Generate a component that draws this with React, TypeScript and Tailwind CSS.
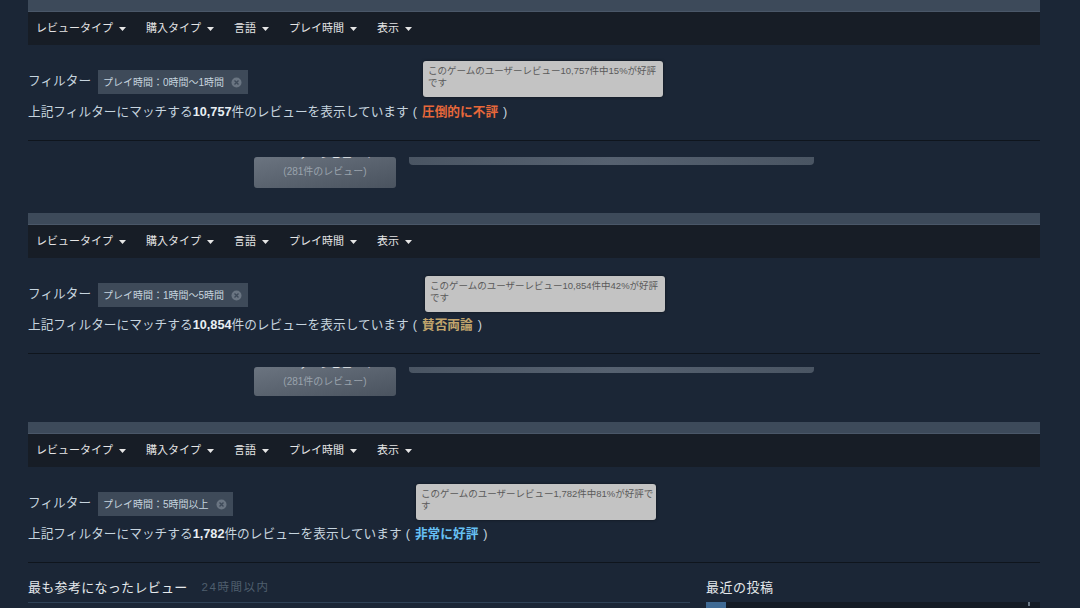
import React from "react";

type Section = {
  chip: string;
  count: string;
  rating: string;
  ratingClass: string;
  tip: [string, string];
  tipLeft: string;
  tipTop: string;
};

const SECTIONS: Section[] = [
  {
    chip: "プレイ時間：0時間～1時間",
    count: "10,757",
    rating: "圧倒的に不評",
    ratingClass: "text-[#e8683a]",
    tip: ["このゲームのユーザーレビュー10,757件中15%が好評", "です"],
    tipLeft: "left-[395px]",
    tipTop: "top-[16px]",
  },
  {
    chip: "プレイ時間：1時間～5時間",
    count: "10,854",
    rating: "賛否両論",
    ratingClass: "text-[#c2a56c]",
    tip: ["このゲームのユーザーレビュー10,854件中42%が好評", "です"],
    tipLeft: "left-[397px]",
    tipTop: "top-[18px]",
  },
  {
    chip: "プレイ時間：5時間以上",
    count: "1,782",
    rating: "非常に好評",
    ratingClass: "text-[#66c0f4]",
    tip: ["このゲームのユーザーレビュー1,782件中81%が好評で", "す"],
    tipLeft: "left-[388px]",
    tipTop: "top-[17px]",
  },
];

const MENU = ["レビュータイプ", "購入タイプ", "言語", "プレイ時間", "表示"];

function Caret() {
  return (
    <svg width="7" height="4" viewBox="0 0 7 4" className="ml-[6px]">
      <path d="M0 0 L7 0 L3.5 4 Z" fill="#e6e6e6" />
    </svg>
  );
}

function ChipClose() {
  return (
    <svg width="11" height="11" viewBox="0 0 11 11">
      <circle cx="5.5" cy="5.5" r="5" fill="#6a7582" />
      <path d="M3.5 3.5 L7.5 7.5 M7.5 3.5 L3.5 7.5" stroke="#3e4a59" strokeWidth="1.4" />
    </svg>
  );
}

function FilterSection({ s }: { s: Section }) {
  return (
    <div>
      {/* lighter strip above the menu */}
      <div className="h-[12px] bg-[#3d4a5a] border-b border-[#4a5768]" />

      {/* dropdown menu bar */}
      <div className="h-[33px] bg-[#171d26] flex items-center pl-[8px] gap-[20px] text-[11px] text-[#e6e6e6]">
        {MENU.map((m) => (
          <div key={m} className="flex items-center">
            <span>{m}</span>
            <Caret />
          </div>
        ))}
      </div>

      {/* filter + summary */}
      <div className="relative h-[96px] border-b border-[#0f151d] pt-[25px]">
        <div className="flex items-center h-[24px]">
          <span className="text-[12.7px] text-[#c6d4df] w-[70px]">フィルター</span>
          <div className="h-[24px] bg-[#3e4a59] flex items-center pl-[5px] pr-[6px] gap-[7px] text-[10px] text-[#c6d4df]">
            <span>{s.chip}</span>
            <ChipClose />
          </div>
        </div>
        <div className="mt-[9px] h-[20px] flex items-center text-[12.7px] text-[#c6d4df] whitespace-nowrap">
          <span>上記フィルターにマッチする</span>
          <span className="font-bold text-[#e8eef3]">{s.count}</span>
          <span>件のレビューを表示しています</span>
          <span className="ml-[4px]">(</span>
          <span className={`mx-[5px] font-bold ${s.ratingClass}`}>{s.rating}</span>
          <span>)</span>
        </div>

        {/* tooltip */}
        <div
          className={`absolute ${s.tipLeft} ${s.tipTop} w-[240px] h-[36px] bg-[#c3c3c3] rounded-[3px] shadow-[0_0_3px_rgba(0,0,0,0.5)] px-[5px] pt-[4px] text-[9.5px] leading-[12px] text-[#5a5a5a] whitespace-nowrap`}
        >
          <div>{s.tip[0]}</div>
          <div>{s.tip[1]}</div>
        </div>
      </div>
    </div>
  );
}

function Fragment({ h, pt, boxH, barH }: { h: string; pt: string; boxH: string; barH: string }) {
  return (
    <div className={`${h} ${pt} pl-[226px] flex items-start gap-[13px]`}>
      <div
        className={`w-[142px] ${boxH} rounded-[3px] bg-gradient-to-br from-[#6b7480] via-[#5a636f] to-[#4a535f] flex flex-col items-center`}
      >
        <div className="h-[4px] overflow-hidden">
          <div className="-mt-[9px] text-[11px] leading-[13px] text-[#e4e8ec]">ユーザーレビュー：</div>
        </div>
        <div className="mt-[3px] text-[10px] text-[#9aa3ad]">(281件のレビュー)</div>
      </div>
      <div className={`w-[405px] ${barH} rounded-b-[4px] bg-gradient-to-r from-[#4a5563] via-[#566170] to-[#4a5563]`} />
    </div>
  );
}

export default function App() {
  return (
    <div className="w-[1080px] h-[608px] overflow-hidden bg-[#1b2636] font-['Liberation_Sans','Noto_Sans_CJK_JP',sans-serif]">
      <div className="ml-[28px] w-[1012px]">
        <FilterSection s={SECTIONS[0]} />
        <Fragment h="h-[72px]" pt="pt-[16px]" boxH="h-[31px]" barH="h-[8px]" />
        <FilterSection s={SECTIONS[1]} />
        <Fragment h="h-[68px]" pt="pt-[13px]" boxH="h-[29px]" barH="h-[6px]" />
        <FilterSection s={SECTIONS[2]} />

        {/* bottom: most helpful / recent */}
        <div className="flex gap-[16px]">
          <div className="w-[662px]">
            <div className="h-[40px] pt-[15px] flex items-start border-b border-[#2f4257]">
              <span className="text-[13px] text-[#e5e9ec] tracking-[0.3px]">最も参考になったレビュー</span>
              <span className="ml-[14px] text-[11.5px] text-[#4f5f6e] tracking-[1.5px] mt-[1px]">24時間以内</span>
            </div>
          </div>
          <div className="w-[334px]">
            <div className="h-[39px] pt-[15px] text-[13px] text-[#e5e9ec] tracking-[0.5px]">最近の投稿</div>
            <div className="h-[20px] bg-[#141b25] flex items-start">
              <div className="w-[20px] h-[8px] bg-[#3f6a94]" />
              <div className="ml-auto mr-[10px] w-[2px] h-[4px] bg-[#6b7886]" />
            </div>
          </div>
        </div>
      </div>
    </div>
  );
}
